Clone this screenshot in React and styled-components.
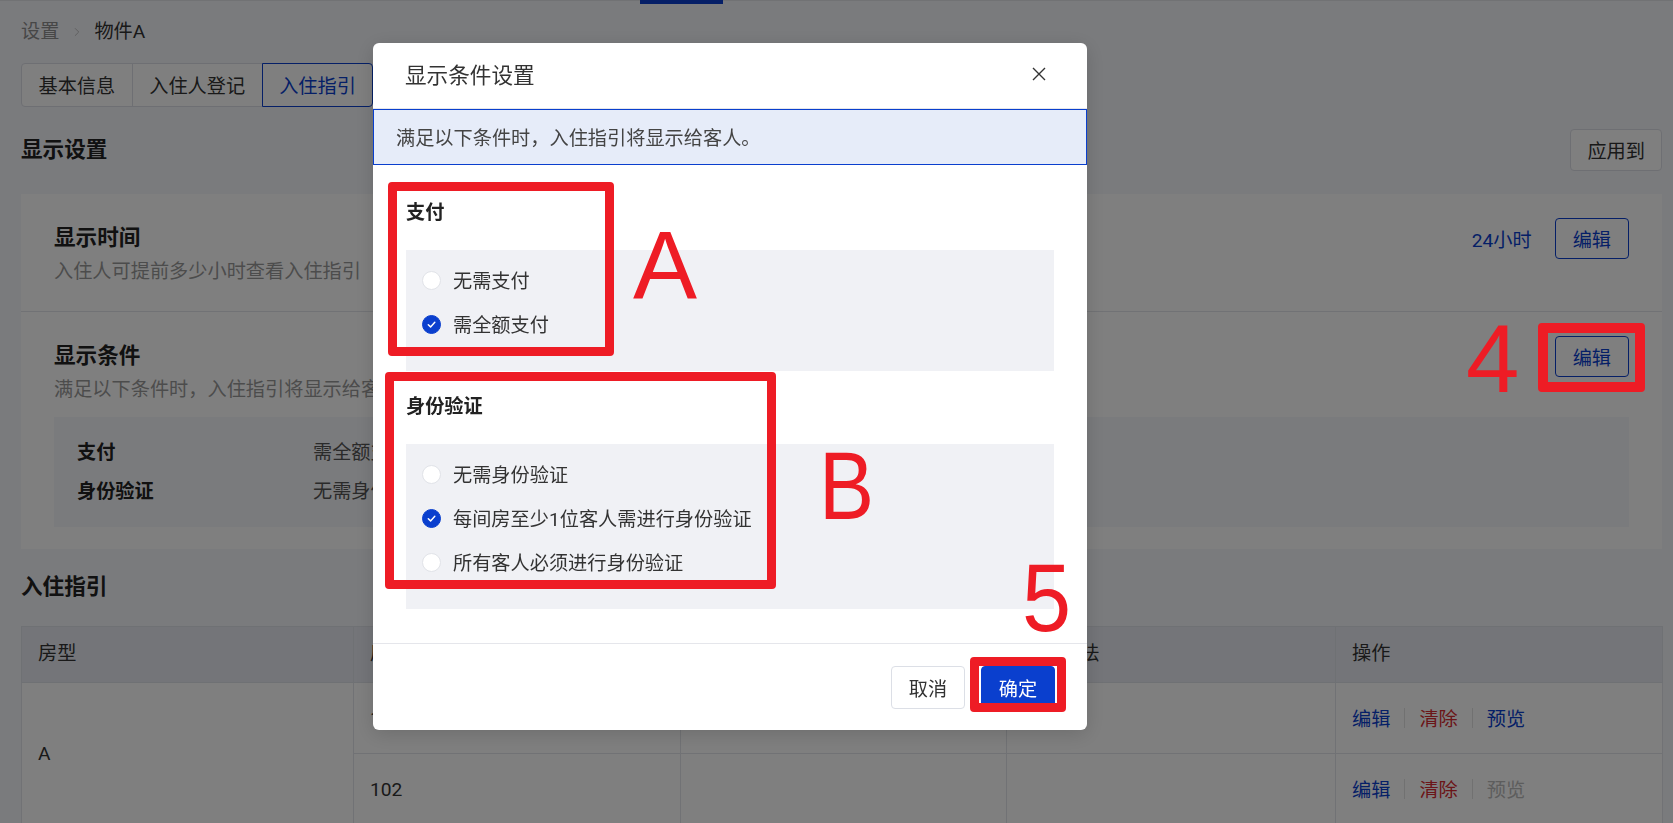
import styled, { createGlobalStyle } from "styled-components";
import { ChevronRight } from "lucide-react";

const GlobalStyle = createGlobalStyle`
    html, body {
        margin: 0;
        padding: 0;
        height: 100%;
        overflow: hidden;
    }
    body {
        font-family: Roboto, "Noto Sans CJK SC", sans-serif;
        font-size: 19.2px;
        color: #333;
        background: #f5f6fb;
    }
    * { box-sizing: border-box; }
`;

const BLUE = "#0a3fce";
const RED = "#ee1c25";

const Page = styled.div`
    position: relative;
    min-height: 100vh;
    background: #f5f6fb;
`;

const TopStrip = styled.div`
    height: 4px;
    border-top: 1px solid #e3e4e8;
    display: flex;
    padding-left: 640px;
`;

const NavIndicator = styled.div`
    width: 83px;
    height: 4px;
    margin-top: -1px;
    background: ${BLUE};
`;

const Content = styled.div`
    padding: 0 11px 0 21px;
`;

const Breadcrumb = styled.div`
    display: flex;
    align-items: center;
    height: 26px;
    margin-top: 15px;
    line-height: 26px;
    color: #333;
    svg { color: #b8b8b8; margin: 0 10px 0 11px; }
`;

const Crumb = styled.span`
    color: ${(p) => (p.$muted ? "#8e8e8e" : "#333")};
`;

const Tabs = styled.div`
    display: flex;
    margin-top: 18px;
`;

const Tab = styled.div`
    height: 44px;
    padding: 0 16.5px;
    display: flex;
    align-items: center;
    background: #fff;
    border: 1px solid ${(p) => (p.$active ? BLUE : "#dcdfe6")};
    color: ${(p) => (p.$active ? BLUE : "#333")};
    margin-left: ${(p) => (p.$first ? "0" : "-1px")};
    position: ${(p) => (p.$active ? "relative" : "static")};
    &:first-child { border-radius: 4px 0 0 4px; }
    &:last-child { border-radius: 0 4px 4px 0; }
`;

const SectionHeader = styled.div`
    display: flex;
    align-items: center;
    justify-content: space-between;
    height: 42px;
    margin: ${(p) => p.$top}px 0 ${(p) => p.$bottom}px;
`;

const SectionTitle = styled.h2`
    margin: 0;
    font-size: 21.6px;
    font-weight: 700;
    color: #222;
    line-height: 28px;
`;

const GhostButton = styled.button`
    height: 42px;
    padding: 0 16px;
    font: inherit;
    color: #333;
    background: #fff;
    border: 1px solid #dcdfe6;
    border-radius: 4px;
`;

const Card = styled.div`
    background: #fff;
`;

const CardRow = styled.div`
    padding: 30px 33px ${(p) => p.$bottom}px;
    & + & { border-top: 1px solid #e3e5ea; }
`;

const RowHead = styled.div`
    display: flex;
    justify-content: space-between;
    align-items: flex-start;
`;

const RowTitle = styled.div`
    font-size: 21.6px;
    font-weight: 700;
    color: #222;
    line-height: 28px;
`;

const RowDesc = styled.div`
    margin-top: 7px;
    line-height: 26px;
    color: #999;
`;

const RowActions = styled.div`
    display: flex;
    align-items: center;
    gap: 23px;
    margin-top: -6px;
`;

const ValueText = styled.span`
    color: ${BLUE};
`;

const OutlineButton = styled.button`
    height: 41px;
    padding: 0 17px;
    font: inherit;
    color: ${BLUE};
    background: #fff;
    border: 1px solid ${BLUE};
    border-radius: 4px;
`;

const Summary = styled.div`
    margin-top: 14px;
    background: #f5f6fa;
    padding: 24px 23px 23px;
    display: grid;
    grid-template-columns: 236px 1fr;
    row-gap: 15px;
    line-height: 24px;
`;

const SummaryLabel = styled.span`
    font-weight: 700;
    color: #222;
`;

const SummaryValue = styled.span`
    color: #555;
`;

const Table = styled.table`
    width: 1641px;
    border-collapse: collapse;
    background: #fff;
    table-layout: fixed;
`;

const Th = styled.th`
    height: 56px;
    padding: 0 16px 5px;
    text-align: left;
    font-weight: 400;
    color: #333;
    background: #e8ebf2;
    border: 1px solid #dfe2e8;
`;

const Td = styled.td`
    height: 71px;
    padding: 0 16px;
    color: #333;
    border: 1px solid #e3e5ea;
`;

const Links = styled.div`
    display: flex;
    align-items: center;
    gap: 14px;
`;

const LinkText = styled.span`
    color: ${(p) => (p.$tone === "red" ? "#d62a31" : p.$tone === "off" ? "#bbb" : BLUE)};
`;

const Sep = styled.span`
    width: 1px;
    height: 20px;
    background: #e3e3e3;
`;

const Overlay = styled.div`
    position: fixed;
    inset: 0;
    background: rgba(0, 0, 0, 0.5);
    padding: 43px 0 0 373px;
    z-index: 10;
`;

const Modal = styled.div`
    width: 714px;
    background: #fff;
    border-radius: 6px;
    overflow: hidden;
    box-shadow: 0 4px 20px rgba(0, 0, 0, 0.15);
`;

const ModalHeader = styled.div`
    height: 66px;
    padding: 0 32px;
    display: flex;
    align-items: center;
    justify-content: space-between;
    border-bottom: 1px solid #e5e6eb;
`;

const ModalTitle = styled.div`
    font-size: 21.6px;
    color: #333;
    line-height: 28px;
`;

const CloseBtn = styled.button`
    border: none;
    background: none;
    padding: 0;
    width: 20px;
    height: 20px;
    margin: -4px 6px 0 0;
    display: flex;
    align-items: center;
    justify-content: center;
    color: #333;
`;

const Alert = styled.div`
    height: 56px;
    padding: 0 22px;
    display: flex;
    align-items: center;
    background: #e6ecf9;
    border: 1px solid ${BLUE};
    color: #444;
`;

const ModalBody = styled.div`
    padding: 35px 33px 34px;
`;

const GroupTitle = styled.div`
    font-weight: 700;
    color: #222;
    line-height: 26px;
    margin-top: ${(p) => (p.$first ? 0 : 23)}px;
`;

const OptionBox = styled.div`
    margin-top: 24px;
    background: #f0f1f5;
    padding: 18px 16px 35px;
    display: flex;
    flex-direction: column;
    gap: 20px;
`;

const Option = styled.label`
    display: flex;
    align-items: center;
    gap: 12px;
    height: 24px;
    color: #333;
`;

const RadioDot = styled.span`
    width: 19px;
    height: 19px;
    border-radius: 50%;
    display: flex;
    align-items: center;
    justify-content: center;
    background: ${(p) => (p.$checked ? BLUE : "#fff")};
    border: 1px solid ${(p) => (p.$checked ? BLUE : "#e1e3e8")};
`;

const ModalFooter = styled.div`
    border-top: 1px solid #e5e6eb;
    padding: 22px 32px 21px;
    display: flex;
    justify-content: flex-end;
    gap: 16px;
`;

const FooterButton = styled.button`
    height: 43px;
    width: 74px;
    font: inherit;
    border-radius: 4px;
    border: 1px solid ${(p) => (p.$primary ? BLUE : "#dcdfe6")};
    background: ${(p) => (p.$primary ? BLUE : "#fff")};
    color: ${(p) => (p.$primary ? "#fff" : "#333")};
`;

const Mark = styled.div`
    position: absolute;
    z-index: 20;
    left: ${(p) => p.$x}px;
    top: ${(p) => p.$y}px;
    width: ${(p) => p.$w}px;
    height: ${(p) => p.$h}px;
    border: ${(p) => p.$t}px solid ${RED};
    border-radius: 4px;
`;

const MarkLabel = styled.span`
    position: absolute;
    z-index: 20;
    left: ${(p) => p.$x}px;
    top: ${(p) => p.$y}px;
    font-family: "Liberation Sans", Arial, sans-serif;
    font-size: 96px;
    line-height: 1;
    color: ${RED};
    transform: scaleX(${(p) => p.$sx || 1});
    transform-origin: left top;
`;

const Radio = ({ checked, children }) => (
    <Option>
        <RadioDot $checked={checked}>
            {checked && (
                <svg width="11" height="11" viewBox="0 0 12 12">
                    <path d="M2.5 6.2 L5 8.6 L9.6 3.6" fill="none" stroke="#fff" strokeWidth="1.6" strokeLinecap="round" strokeLinejoin="round" />
                </svg>
            )}
        </RadioDot>
        {children}
    </Option>
);

const App = () => {
    return (
        <Page>
            <GlobalStyle />
            <TopStrip>
                <NavIndicator />
            </TopStrip>
            <Content>
                <Breadcrumb>
                    <Crumb $muted>设置</Crumb>
                    <ChevronRight size={14} strokeWidth={1.5} />
                    <Crumb>物件A</Crumb>
                </Breadcrumb>
                <Tabs>
                    <Tab $first>基本信息</Tab>
                    <Tab>入住人登记</Tab>
                    <Tab $active>入住指引</Tab>
                </Tabs>

                <SectionHeader $top={22} $bottom={23}>
                    <SectionTitle>显示设置</SectionTitle>
                    <GhostButton>应用到</GhostButton>
                </SectionHeader>

                <Card>
                    <CardRow $bottom={26}>
                        <RowHead>
                            <div>
                                <RowTitle>显示时间</RowTitle>
                                <RowDesc>入住人可提前多少小时查看入住指引</RowDesc>
                            </div>
                            <RowActions>
                                <ValueText>24小时</ValueText>
                                <OutlineButton>编辑</OutlineButton>
                            </RowActions>
                        </RowHead>
                    </CardRow>
                    <CardRow $bottom={22}>
                        <RowHead>
                            <div>
                                <RowTitle>显示条件</RowTitle>
                                <RowDesc>满足以下条件时，入住指引将显示给客人。</RowDesc>
                            </div>
                            <RowActions>
                                <OutlineButton>编辑</OutlineButton>
                            </RowActions>
                        </RowHead>
                        <Summary>
                            <SummaryLabel>支付</SummaryLabel>
                            <SummaryValue>需全额支付</SummaryValue>
                            <SummaryLabel>身份验证</SummaryLabel>
                            <SummaryValue>无需身份验证</SummaryValue>
                        </Summary>
                    </CardRow>
                </Card>

                <SectionHeader $top={17} $bottom={18}>
                    <SectionTitle>入住指引</SectionTitle>
                </SectionHeader>

                <Table>
                    <colgroup>
                        <col style={{ width: 332 }} />
                        <col style={{ width: 327 }} />
                        <col style={{ width: 326 }} />
                        <col style={{ width: 329 }} />
                        <col style={{ width: 327 }} />
                    </colgroup>
                    <thead>
                        <tr>
                            <Th>房型</Th>
                            <Th>房间</Th>
                            <Th>指引</Th>
                            <Th>入住方法</Th>
                            <Th>操作</Th>
                        </tr>
                    </thead>
                    <tbody>
                        <tr>
                            <Td rowSpan={2}>A</Td>
                            <Td>101</Td>
                            <Td />
                            <Td />
                            <Td>
                                <Links>
                                    <LinkText>编辑</LinkText>
                                    <Sep />
                                    <LinkText $tone="red">清除</LinkText>
                                    <Sep />
                                    <LinkText>预览</LinkText>
                                </Links>
                            </Td>
                        </tr>
                        <tr>
                            <Td>102</Td>
                            <Td />
                            <Td />
                            <Td>
                                <Links>
                                    <LinkText>编辑</LinkText>
                                    <Sep />
                                    <LinkText $tone="red">清除</LinkText>
                                    <Sep />
                                    <LinkText $tone="off">预览</LinkText>
                                </Links>
                            </Td>
                        </tr>
                    </tbody>
                </Table>
            </Content>

            <Overlay>
                <Modal>
                    <ModalHeader>
                        <ModalTitle>显示条件设置</ModalTitle>
                        <CloseBtn>
                            <svg width="14" height="14" viewBox="0 0 14 14">
                                <path d="M1 1 L13 13 M13 1 L1 13" stroke="#333" strokeWidth="1.4" fill="none" />
                            </svg>
                        </CloseBtn>
                    </ModalHeader>
                    <Alert>满足以下条件时，入住指引将显示给客人。</Alert>
                    <ModalBody>
                        <GroupTitle $first>支付</GroupTitle>
                        <OptionBox>
                            <Radio>无需支付</Radio>
                            <Radio checked>需全额支付</Radio>
                        </OptionBox>
                        <GroupTitle>身份验证</GroupTitle>
                        <OptionBox>
                            <Radio>无需身份验证</Radio>
                            <Radio checked>每间房至少1位客人需进行身份验证</Radio>
                            <Radio>所有客人必须进行身份验证</Radio>
                        </OptionBox>
                    </ModalBody>
                    <ModalFooter>
                        <FooterButton>取消</FooterButton>
                        <FooterButton $primary>确定</FooterButton>
                    </ModalFooter>
                </Modal>
            </Overlay>

            <Mark $x={388} $y={182} $w={226} $h={174} $t={9} />
            <MarkLabel $x={633} $y={217}>A</MarkLabel>
            <Mark $x={385} $y={372} $w={391} $h={217} $t={9} />
            <MarkLabel $x={819} $y={438} $sx={0.86}>B</MarkLabel>
            <Mark $x={1538} $y={323} $w={107} $h={69} $t={10} />
            <MarkLabel $x={1466} $y={311}>4</MarkLabel>
            <MarkLabel $x={1022} $y={550} $sx={0.92}>5</MarkLabel>
            <Mark $x={970} $y={657} $w={96} $h={55} $t={9} />
        </Page>
    );
};

export default App;
